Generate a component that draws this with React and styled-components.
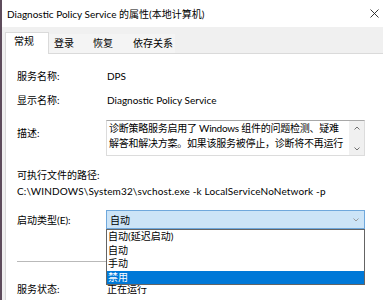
import React from "react";
import styled, { createGlobalStyle } from "styled-components";

const GlobalStyle = createGlobalStyle`
  html, body { margin: 0; padding: 0; background: #f0f0f0; }
  body {
    font-family: "Lato", "Noto Sans CJK SC", sans-serif;
    font-size: 10px;
    color: #000;
  }
  * { box-sizing: border-box; }
`;

const Window = styled.div`
  width: 383px;
  height: 300px;
  overflow: hidden;
  border-left: 2px solid #5e4c5c;
  background: #f0f0f0;
  display: flex;
  flex-direction: column;
`;

const TitleBar = styled.div`
  height: 27px;
  flex: none;
  background: #fff;
  display: flex;
  align-items: center;
  justify-content: space-between;
  padding: 0 2px 0 5px;
  font-size: 10px;
  line-height: 14px;
  color: #000;
`;

const CloseButton = styled.div`
  width: 14px;
  height: 14px;
  display: flex;
  align-items: center;
  justify-content: center;
`;

const Body = styled.div`
  flex: 1;
  display: flex;
  flex-direction: column;
  padding: 4px 0 0 3px;
`;

const TabStrip = styled.div`
  display: flex;
  align-items: flex-end;
  height: 22px;
  flex: none;
  position: relative;
  z-index: 1;
`;

const Tab = styled.div`
  width: ${(p) => p.$w}px;
  height: ${(p) => (p.$active ? 22 : 19)}px;
  padding-left: ${(p) => (p.$active ? 8 : 4)}px;
  padding-bottom: ${(p) => (p.$active ? 6 : 3)}px;
  display: flex;
  align-items: center;
  line-height: 14px;
  white-space: nowrap;
  background: ${(p) => (p.$active ? "#fff" : "#f4f4f4")};
  border: 1px solid ${(p) => (p.$active ? "#dadada" : "transparent")};
  border-bottom: none;
  margin-bottom: ${(p) => (p.$active ? "-1px" : "0")};
`;

const Panel = styled.div`
  flex: 1;
  background: #fff;
  border: 1px solid #dadada;
  border-right: none;
  border-bottom: none;
  padding: 14px 0 0 11px;
  display: flex;
  flex-direction: column;
`;

const Row = styled.div`
  display: grid;
  grid-template-columns: 89px 259px;
  align-items: ${(p) => p.$align || "center"};
  margin-top: ${(p) => p.$mt || 0}px;
  line-height: 16px;
  position: relative;
`;

const Label = styled.div`
  white-space: nowrap;
  margin-top: ${(p) => p.$mt || 0}px;
`;

const Value = styled.div`
  white-space: nowrap;
  padding-left: 1px;
`;

const TextBox = styled.div`
  height: 36px;
  border: 1px solid #dcdcdc;
  border-top-color: #a8a8a8;
  display: flex;
  overflow: hidden;
`;

const TextContent = styled.div`
  flex: 1;
  padding: 0 0 0 2px;
  line-height: 15px;
  letter-spacing: -0.25px;
  white-space: nowrap;
  overflow: hidden;
`;

const ScrollBar = styled.div`
  width: 15px;
  flex: none;
  background: #f0f0f0;
  display: flex;
  flex-direction: column;
  justify-content: space-between;
  align-items: center;
  padding: 5px 0 4px;
`;

const Plain = styled.div`
  line-height: 16px;
  white-space: nowrap;
  letter-spacing: ${(p) => p.$ls || 0}px;
  margin-top: ${(p) => p.$mt || 0}px;
`;

const Combo = styled.div`
  height: 19px;
  background: #cce4f7;
  border: 1px solid #6fa8dc;
  display: flex;
  align-items: center;
  justify-content: space-between;
  padding: 0 5px 0 3px;
  position: relative;
`;

const DropList = styled.div`
  position: absolute;
  left: -1px;
  top: 18px;
  width: 259px;
  height: 56px;
  background: #fff;
  border: 1px solid #646464;
  display: flex;
  flex-direction: column;
  z-index: 5;
`;

const Option = styled.div`
  height: 13.5px;
  line-height: 13.5px;
  padding-left: 1px;
  white-space: nowrap;
  background: ${(p) => (p.$selected ? "#0078d7" : "transparent")};
  color: ${(p) => (p.$selected ? "#fff" : "#000")};
`;

const Separator = styled.div`
  height: 1px;
  width: 348px;
  background: #b9b9b9;
  margin-top: 32px;
`;

const Chevron = ({ up, color = "#707070" }) => (
  <svg width="6" height="4" viewBox="0 0 6 4">
    <path
      d={up ? "M0.5 3.5 L3 1 L5.5 3.5" : "M0.5 0.5 L3 3 L5.5 0.5"}
      fill="none"
      stroke={color}
      strokeWidth="1"
    />
  </svg>
);

export default function App() {
  return (
    <>
      <GlobalStyle />
      <Window>
        <TitleBar>
          <span>Diagnostic Policy Service 的属性(本地计算机)</span>
          <CloseButton>
            <svg width="9" height="9" viewBox="0 0 9 9">
              <path d="M0.5 0.5 L8.5 8.5 M8.5 0.5 L0.5 8.5" stroke="#222" strokeWidth="0.9" fill="none" />
            </svg>
          </CloseButton>
        </TitleBar>
        <Body>
          <TabStrip>
            <Tab $active $w={44}>常规</Tab>
            <Tab $w={39}>登录</Tab>
            <Tab $w={40}>恢复</Tab>
            <Tab $w={47}>依存关系</Tab>
          </TabStrip>
          <Panel>
            <Row>
              <Label>服务名称:</Label>
              <Value>DPS</Value>
            </Row>
            <Row $mt={8}>
              <Label>显示名称:</Label>
              <Value>Diagnostic Policy Service</Value>
            </Row>
            <Row $mt={12} $align="start">
              <Label $mt={5}>描述:</Label>
              <TextBox>
                <TextContent>
                  诊断策略服务启用了 Windows 组件的问题检测、疑难
                  <br />
                  解答和解决方案。如果该服务被停止，诊断将不再运行
                </TextContent>
                <ScrollBar>
                  <Chevron up />
                  <Chevron />
                </ScrollBar>
              </TextBox>
            </Row>
            <Plain $mt={11}>可执行文件的路径:</Plain>
            <Plain $ls={0.15}>C:\WINDOWS\System32\svchost.exe -k LocalServiceNoNetwork -p</Plain>
            <Row $mt={11}>
              <Label>启动类型(E):</Label>
              <Combo>
                <span>自动</span>
                <Chevron color="#9a9a9a" />
                <DropList>
                  <Option>自动(延迟启动)</Option>
                  <Option>自动</Option>
                  <Option>手动</Option>
                  <Option $selected>禁用</Option>
                </DropList>
              </Combo>
            </Row>
            <Separator />
            <Row $mt={19}>
              <Label>服务状态:</Label>
              <Value>正在运行</Value>
            </Row>
          </Panel>
        </Body>
      </Window>
    </>
  );
}
